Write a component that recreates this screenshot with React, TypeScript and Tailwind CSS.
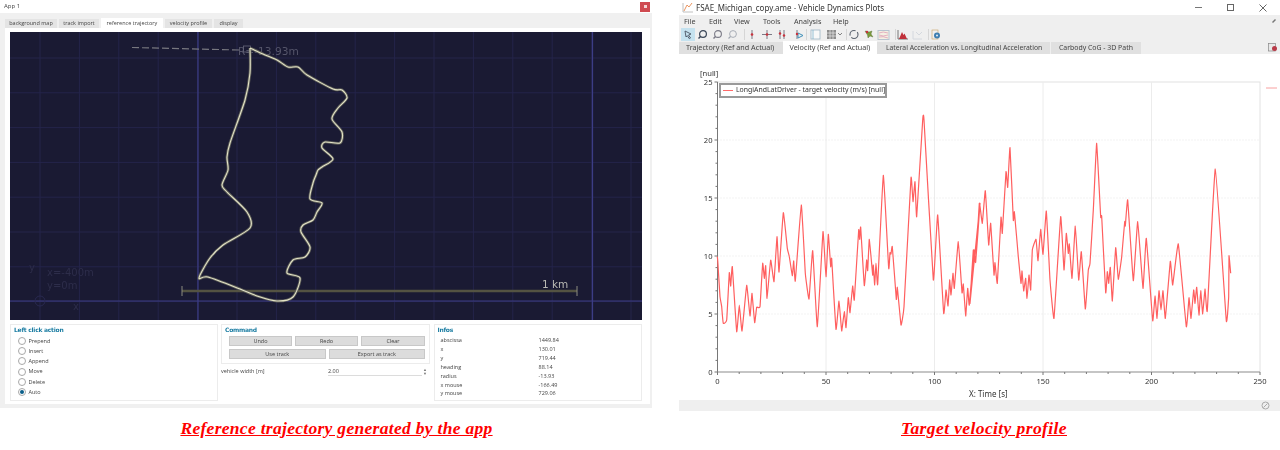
import React from "react";

const trackPts: number[][] = [[250,48],[263,54],[277,60],[288,67],[298,67],[307,75],[333,89],[342,90],[347,98],[338,108],[332,119],[342,132],[340,143],[325,142],[322,148],[333,159],[322,167],[318,170],[316,175],[313,183],[310,199],[322,203],[317,212],[313,220],[303,225],[301,232],[310,247],[305,257],[293,260],[287,273],[300,278],[293,297],[277,301],[257,296],[240,289],[208,277],[199,278],[210,258],[223,245],[250,228],[247,212],[227,192],[222,185],[228,170],[227,157],[230,143],[245,100],[250,73],[250,48]];

const v1: number[][] = [[52,470],[55,510],[60,590],[65,620],[70,670],[80,660],[88,518],[92,558],[97,500],[110,695],[118,615],[126,693],[140,556],[150,648],[156,580],[164,668],[170,622],[180,620],[188,490],[193,535],[197,497],[201,595],[212,480],[222,545],[231,410],[237,516],[250,338],[262,445],[268,470],[277,527],[281,483],[286,543],[304,315],[316,520],[327,597],[338,452],[352,680],[369,395],[378,530],[385,403],[392,500],[395,476],[408,688],[417,603],[425,693],[433,635],[438,683],[445,593],[450,638],[458,558],[463,600],[476,390],[479,418],[482,382],[493,557],[500,480],[503,512],[508,418],[518,525],[520,495],[524,555],[528,490],[533,553],[550,226],[566,505],[570,458],[573,462],[577,440],[589,598],[592,562],[603,675],[612,620],[633,233],[639,305],[645,245],[650,350],[668,60],[672,60],[700,540],[713,345],[731,640],[738,570],[744,618],[749,540],[753,585],[759,520],[763,565],[775,425],[786,578],[790,552],[797,648],[803,565],[808,615],[822,450],[827,485],[840,310]];
const v2: number[][] = [[0,610],[10,450],[17,487],[28,310],[37,370],[46,272],[56,435],[62,370],[72,525],[75,488],[82,550],[93,352],[97,400],[108,215],[113,262],[120,143],[130,360],[133,335],[137,380],[145,470],[153,550],[156,513],[161,573],[167,535],[171,595],[177,525],[182,570],[187,450],[198,418],[204,482],[212,388],[219,463],[229,333],[240,540],[252,655],[272,350],[282,510],[289,400],[295,460],[298,432],[306,535],[316,378],[326,540],[334,455],[346,627],[355,510],[360,490],[370,330],[380,130],[392,350],[395,350],[407,578],[412,515],[416,550],[421,502],[427,603],[437,443],[445,538],[455,470],[464,365],[466,378],[473,300],[490,542],[503,365],[519,565],[529,415],[548,662],[555,588],[561,655],[567,572],[573,630],[579,572],[586,655],[601,484],[608,555],[625,432],[649,680],[657,593],[663,655],[671,570],[675,610],[680,562],[687,645],[692,572],[698,642],[705,567],[712,632],[736,207],[769,662],[776,590],[777,467],[782,520]];

function smooth(pts: number[][], k: number) {
  let d = `M${pts[0][0].toFixed(1)} ${pts[0][1].toFixed(1)}`;
  for (let i = 0; i < pts.length - 1; i++) {
    const p0 = pts[Math.max(i - 1, 0)];
    const p1 = pts[i];
    const p2 = pts[i + 1];
    const p3 = pts[Math.min(i + 2, pts.length - 1)];
    const c1x = p1[0] + (p2[0] - p0[0]) * k;
    const c1y = p1[1] + (p2[1] - p0[1]) * k;
    const c2x = p2[0] - (p3[0] - p1[0]) * k;
    const c2y = p2[1] - (p3[1] - p1[1]) * k;
    d += `C${c1x.toFixed(1)} ${c1y.toFixed(1)} ${c2x.toFixed(1)} ${c2y.toFixed(1)} ${p2[0].toFixed(1)} ${p2[1].toFixed(1)}`;
  }
  return d;
}

const trackD = smooth(trackPts, 0.14);
const velocityD = smooth(
  [
    ...v1.map(([x, y]) => [x / 3 + 700 - 679, y / 3 + 100 - 54]),
    ...v2.map(([x, y]) => [x / 3 + 970 - 679, y / 3 + 100 - 54]),
  ],
  0.05,
);

const range = (n: number) => Array.from({ length: n }, (_, i) => i);

function TrackPlot() {
  const font = "DejaVu Sans, sans-serif";
  return (
    <svg width="632" height="288" viewBox="10 32 632 288" className="block">
      <rect x="10" y="32" width="632" height="288" fill="#1a1a33" />
      {range(16).map((i) => (
        <line key={i} x1={40 + i * 39.4} x2={40 + i * 39.4} y1="32" y2="320" stroke="#24244a" strokeWidth="1" />
      ))}
      {range(8).map((i) => (
        <line key={i} y1={58 + i * 34.8} y2={58 + i * 34.8} x1="10" x2="642" stroke="#24244a" strokeWidth="1" />
      ))}
      <line x1="198" x2="198" y1="32" y2="320" stroke="#3c3d85" strokeWidth="1.2" />
      <line x1="592.5" x2="592.5" y1="32" y2="320" stroke="#3c3d85" strokeWidth="1.2" />
      <line x1="10" x2="642" y1="301" y2="301" stroke="#3c3d85" strokeWidth="1.2" />
      <circle cx="40" cy="301" r="5" fill="none" stroke="#292950" />
      <text x="29" y="271" fontSize="10" fill="#2d2d4a" fontFamily={font}>y</text>
      <text x="73" y="310" fontSize="10" fill="#2d2d4a" fontFamily={font}>x</text>
      <text x="47" y="276" fontSize="10" fill="#2d2d4a" fontFamily={font}>x=-400m</text>
      <text x="47" y="289" fontSize="10" fill="#2d2d4a" fontFamily={font}>y=0m</text>
      <line x1="132" y1="47.5" x2="240" y2="50" stroke="#77777f" strokeWidth="1.2" strokeDasharray="7 3" />
      <text x="238" y="55" fontSize="10.6" fill="#55556a" fontFamily={font}>R=-13.93m</text>
      <line x1="182" x2="577" y1="291" y2="291" stroke="#545342" strokeWidth="2.5" />
      <line x1="182" x2="182" y1="286" y2="296" stroke="#8b8b80" strokeWidth="1" />
      <line x1="577" x2="577" y1="286" y2="296" stroke="#8b8b80" strokeWidth="1" />
      <text x="542" y="288" fontSize="10.5" fill="#b9b9b4" fontFamily={font}>1 km</text>
      <rect x="243.500" y="46" width="7" height="6" fill="none" stroke="#66667a" strokeWidth="0.8" />
      <path d={trackD} fill="none" stroke="#5d5d58" strokeWidth="2.8" strokeLinejoin="round" />
      <path d={trackD} fill="none" stroke="#e2e2c6" strokeWidth="1.1" strokeLinejoin="round" />
    </svg>
  );
}

function Radio({ label, checked }: { label: string; checked?: boolean }) {
  return (
    <div className="flex items-center h-[10.3px] pl-[6.5px] gap-[3px]">
      <span className="w-2 h-2 rounded-full border border-[#a8a8a8] bg-white flex items-center justify-center shrink-0">
        {checked && <span className="w-1 h-1 rounded-full bg-[#0a5f8a]" />}
      </span>
      <span>{label}</span>
    </div>
  );
}

function Btn({ label, w }: { label: string; w: string }) {
  return (
    <div className={`${w} h-[10px] bg-[#dcdcdc] border border-[#c8c8c8] flex items-center justify-center`}>{label}</div>
  );
}

const infos = [
  ["abscissa", "1449.84"],
  ["x", "130.01"],
  ["y", "719.44"],
  ["heading", "88.14"],
  ["radius", "-13.93"],
  ["x mouse", "-166.49"],
  ["y mouse", "729.06"],
];

const groupTitle = "pl-[3px] font-bold text-[#1d7ea3] text-[6px] leading-[8px] pt-[1px] font-['DejaVu_Sans',sans-serif] tracking-[-0.25px]";

function LeftWindow() {
  return (
    <div className="h-[408px] bg-[#f0f0f0] flex flex-col text-[5.5px] text-[#444] font-['Open_Sans',sans-serif] blur-[0.35px]">
      <div className="h-[13px] bg-white flex items-center justify-between pl-1 pr-[2px] text-[6px]">
        <span>App 1</span>
        <span className="w-[10px] h-[10px] bg-[#cf4a50] flex items-center justify-center">
          <span className="w-[3px] h-[3px] bg-[#f3d4d4]" />
        </span>
      </div>
      <div className="flex items-end h-[15px] pl-[5px] gap-[2px] text-[5.5px]">
        <div className="w-[52px] h-[9.5px] bg-[#e4e4e4] flex items-center justify-center">background map</div>
        <div className="w-[40px] h-[9.5px] bg-[#e4e4e4] flex items-center justify-center">track import</div>
        <div className="w-[62px] h-[10px] bg-white flex items-center justify-center">reference trajectory</div>
        <div className="w-[47px] h-[9.5px] bg-[#e4e4e4] flex items-center justify-center">velocity profile</div>
        <div className="w-[29px] h-[9.5px] bg-[#e4e4e4] flex items-center justify-center">display</div>
      </div>
      <div className="mx-[5px] w-[645px] h-[376px] bg-white pt-1 px-[5px]">
        <div className="w-[632px] h-[288px]">
          <TrackPlot />
        </div>
        <div className="flex mt-[3.5px] gap-[3.5px] h-[77px]">
          <div className="w-[207.5px] border border-[#ececec] flex flex-col">
            <div className={`${groupTitle} h-[11px]`}>Left click action</div>
            <Radio label="Prepend" />
            <Radio label="Insert" />
            <Radio label="Append" />
            <Radio label="Move" />
            <Radio label="Delete" />
            <Radio label="Auto" checked />
          </div>
          <div className="w-[209px] flex flex-col">
            <div className="h-[40px] border border-[#ececec]">
              <div className={`${groupTitle} h-[11.5px]`}>Command</div>
              <div className="flex flex-col gap-[3px] pl-[7px]">
                <div className="flex gap-[3px]">
                  <Btn label="Undo" w="w-[63px]" />
                  <Btn label="Redo" w="w-[63px]" />
                  <Btn label="Clear" w="w-[64px]" />
                </div>
                <div className="flex gap-[3px]">
                  <Btn label="Use track" w="w-[96.5px]" />
                  <Btn label="Export as track" w="w-[96.5px]" />
                </div>
              </div>
            </div>
            <div className="flex items-center h-[10px] mt-[3px]">
              <span className="w-[107px]">vehicle width [m]</span>
              <span className="w-[94px] border-b border-[#dcdcdc] h-[9px] leading-[9px]">2.00</span>
              <span className="ml-[1px] text-[4px] leading-[4px] text-[#777] flex flex-col">
                <span>▲</span>
                <span>▼</span>
              </span>
            </div>
          </div>
          <div className="w-[208px] border border-[#ececec]">
            <div className={`${groupTitle} h-[11.5px]`}>Infos</div>
            {infos.map(([k, v]) => (
              <div key={k} className="flex h-[8.85px] items-center pl-[6px]">
                <span className="w-[98px]">{k}</span>
                <span>{v}</span>
              </div>
            ))}
          </div>
        </div>
      </div>
    </div>
  );
}

function ToolIcons() {
  const g = "#7a7a86";
  const r = "#c8323c";
  return (
    <svg width="270" height="13" viewBox="1 0 270 13" className="block">
      <rect x="3" y="0" width="14" height="13" fill="#c5e2ef" />
      <path d="M7 3l6 3-2.500 1 2 3-1.200.7-2-3L8 9z" fill="none" stroke="#4b5563" strokeWidth="0.9" />
      <circle cx="25" cy="6" r="3.400" fill="none" stroke="#3a4658" strokeWidth="1.200" />
      <path d="M22.500 8.500l-2 2" stroke="#3a4658" strokeWidth="1.400" />
      <circle cx="40" cy="6" r="3.400" fill="none" stroke={g} strokeWidth="1.100" />
      <path d="M37.500 8.500l-2 2" stroke={g} strokeWidth="1.400" />
      <circle cx="55" cy="6" r="3.400" fill="none" stroke="#a0a6b0" strokeWidth="0.9" />
      <path d="M52.500 8.500l-2 2" stroke="#a0a6b0" strokeWidth="1.100" />
      <line x1="66.500" x2="66.500" y1="1" y2="12" stroke="#d6d6d6" />
      <line x1="74" x2="74" y1="2" y2="11" stroke={g} />
      <circle cx="74" cy="6.500" r="1.300" fill={r} />
      <line x1="84" x2="94" y1="6.500" y2="6.500" stroke={g} />
      <line x1="89" x2="89" y1="2" y2="11" stroke={g} />
      <circle cx="89" cy="6.500" r="1.300" fill={r} />
      <line x1="102" x2="102" y1="2" y2="11" stroke={g} />
      <line x1="106" x2="106" y1="2" y2="11" stroke={g} />
      <circle cx="102" cy="5.500" r="1.200" fill={r} />
      <circle cx="106" cy="7.500" r="1.200" fill={r} />
      <line x1="119" x2="119" y1="2" y2="11" stroke={g} />
      <path d="M120 5l5 2.500-5 2.500z" fill="none" stroke="#3f8fb8" />
      <circle cx="119" cy="6" r="1.200" fill={r} />
      <line x1="128.500" x2="128.500" y1="1" y2="12" stroke="#d6d6d6" />
      <rect x="133" y="2" width="9" height="9" fill="#f8f8f8" stroke="#9fb6c6" strokeWidth="0.8" />
      <path d="M135 2v9" stroke="#7fb2cc" strokeWidth="0.8" />
      <rect x="149" y="2" width="9" height="9" fill="#8c8c8c" />
      <path d="M152 2v9M155 2v9M149 5h9M149 8h9" stroke="#e8e8e8" strokeWidth="0.7" />
      <path d="M160 5l2 2 2-2" fill="none" stroke="#666" strokeWidth="0.8" />
      <line x1="168.500" x2="168.500" y1="1" y2="12" stroke="#d6d6d6" />
      <circle cx="176" cy="6.500" r="4" fill="none" stroke="#5c6470" strokeWidth="1.100" strokeDasharray="9 2" />
      <path d="M187 3l4 1 3-1-1 3 2 3-3-1-2 2-.5-3z" fill="#7a9a3a" stroke="#55703a" strokeWidth="0.4" />
      <circle cx="189" cy="4" r="1.200" fill={r} />
      <rect x="200" y="2.500" width="11" height="9" fill="#f4f0e2" stroke="#b8c4d0" />
      <path d="M201 5q4-2 9 0M201 7q4 2 9 0M201 9q4-1 9 1" fill="none" stroke="#e0a0b8" strokeWidth="0.8" />
      <line x1="217.500" x2="217.500" y1="1" y2="12" stroke="#d6d6d6" />
      <path d="M220 2v9h10" fill="none" stroke="#777" />
      <path d="M221 11l3-7 1.500 3 1-1.500 2.500 5.500z" fill="#c0303a" />
      <path d="M235 3v8h9M238 4l3 3 3-3" fill="none" stroke="#d4d8de" strokeWidth="1" />
      <line x1="250.500" x2="250.500" y1="1" y2="12" stroke="#d6d6d6" />
      <rect x="254" y="2" width="6" height="9" fill="#f0f0f0" stroke="#c8a060" strokeWidth="0.6" />
      <circle cx="259" cy="7.500" r="3" fill="#3f7fb0" />
      <circle cx="259" cy="7.500" r="1" fill="#e8eef4" />
    </svg>
  );
}

function VelocityPlot() {
  const X = (v: number) => 717.5 - 679 + v * 2.17;
  const Y = (v: number) => 372 - 54 - v * 11.6;
  const font = "Noto Sans, sans-serif";
  return (
    <svg width="601" height="346" viewBox="0 0 601 346" className="block">
      <text x="21" y="22" fontSize="7.600" fill="#333" fontFamily={font}>[null]</text>
      <rect x={X(0)} y={Y(25)} width={X(250) - X(0)} height={Y(0) - Y(25)} fill="none" stroke="#e2e2e2" />
      {[50, 100, 150, 200].map((v) => (
        <line key={v} x1={X(v)} x2={X(v)} y1={Y(25)} y2={Y(0)} stroke="#ececec" />
      ))}
      {[5, 10, 15, 20].map((v) => (
        <line key={v} y1={Y(v)} y2={Y(v)} x1={X(0)} x2={X(250)} stroke="#e6e6e6" strokeDasharray="1 2" />
      ))}
      <line x1={X(0)} x2={X(0)} y1={Y(25)} y2={Y(0)} stroke="#777" />
      <line x1={X(0)} x2={X(250)} y1={Y(0)} y2={Y(0)} stroke="#999" />
      {range(26).map((i) => (
        <line key={i} x1={X(0) - (i % 5 === 0 ? 3 : 2)} x2={X(0)} y1={Y(i)} y2={Y(i)} stroke="#777" />
      ))}
      {range(26).map((i) => (
        <line key={i} x1={X(i * 10)} x2={X(i * 10)} y1={Y(0)} y2={Y(0) + (i % 5 === 0 ? 3 : 2)} stroke="#777" />
      ))}
      {[0, 5, 10, 15, 20, 25].map((v) => (
        <text key={v} x={X(0) - 5} y={Y(v) + 2.500} fontSize="7.600" textAnchor="end" fill="#333" fontFamily={font}>{v}</text>
      ))}
      {[0, 50, 100, 150, 200, 250].map((v) => (
        <text key={v} x={X(v)} y="330" fontSize="7.600" textAnchor="middle" fill="#333" fontFamily={font}>{v}</text>
      ))}
      <text x="290" y="342.500" fontSize="8" fill="#333" fontFamily={font}>X: Time [s]</text>
      <path d={velocityD} fill="none" stroke="#ff5f5f" strokeWidth="1.200" strokeLinejoin="round" />
      <line x1="587" x2="598" y1="34" y2="34" stroke="#f8a0a0" strokeWidth="1" />
    </svg>
  );
}

function RightWindow() {
  const tab = "h-[12.500px] flex items-center whitespace-nowrap";
  return (
    <div className="h-[411px] bg-white flex flex-col text-[7.200px] text-[#444] font-['Noto_Sans',sans-serif] blur-[0.35px]">
      <div className="h-[15px] flex items-center text-[8px] text-[#333]">
        <svg width="12" height="11" viewBox="0 0 12 11" className="ml-[3px] mr-[2px]">
          <path d="M1 1v9h10" fill="none" stroke="#b0b0b0" strokeWidth="0.8" />
          <path d="M2 9l3-6 2 2 3-4" fill="none" stroke="#e88a50" strokeWidth="0.9" />
        </svg>
        <span>FSAE_Michigan_copy.ame - Vehicle Dynamics Plots</span>
        <div className="ml-auto flex items-center gap-[25px] pr-[13px]">
          <span className="w-[7px] h-[1px] bg-[#777]" />
          <span className="w-[7px] h-[7px] border border-[#666]" />
          <svg width="8" height="8" viewBox="0 0 8 8">
            <path d="M.5.500l7 7M7.500.500l-7 7" stroke="#555" strokeWidth="0.9" />
          </svg>
        </div>
      </div>
      <div className="bg-[#efefef] h-[26px] flex flex-col">
        <div className="h-[13px] flex items-center pl-[5px] relative">
          <span className="w-[25px]">File</span>
          <span className="w-[25px]">Edit</span>
          <span className="w-[29px]">View</span>
          <span className="w-[31px]">Tools</span>
          <span className="w-[39px]">Analysis</span>
          <span>Help</span>
          <svg width="6" height="6" viewBox="0 0 6 6" className="absolute right-[3px] top-[3px]">
            <path d="M1 4l3-3 1 1-3 3z" fill="#777" />
          </svg>
        </div>
        <div className="h-[13px] overflow-hidden">
          <ToolIcons />
        </div>
      </div>
      <div className="bg-[#efefef] h-[13px] flex items-end relative">
        <div className={`${tab} w-[103.500px] bg-[#e0e0e0] pl-[7px]`}>Trajectory (Ref and Actual)</div>
        <div className={`${tab} w-[94.500px] bg-white pl-[7px] h-[13px]`}>Velocity (Ref and Actual)</div>
        <div className={`${tab} w-[173px] bg-[#e0e0e0] pl-[9px] text-[6.800px]`}>Lateral Acceleration vs. Longitudinal Acceleration</div>
        <div className={`${tab} w-[90px] bg-[#e0e0e0] pl-[8px] ml-[1px] text-[6.900px]`}>Carbody CoG - 3D Path</div>
        <svg width="10" height="9" viewBox="0 0 10 9" className="absolute right-[2px] top-[2px]">
          <rect x="0.500" y="0.500" width="7" height="7.500" fill="#e8e8e8" stroke="#888" strokeWidth="0.7" />
          <circle cx="6.500" cy="5.500" r="2.500" fill="#b83a48" />
        </svg>
      </div>
      <div className="h-[346px] relative bg-white">
        <VelocityPlot />
        <div className="absolute left-[40px] top-[29px] w-[168px] h-[15px] bg-white border-2 border-[#9a9a9a] flex items-center pl-[2px] gap-[3px] text-[#333] text-[6.900px] whitespace-nowrap">
          <span className="w-[10px] h-[1px] shrink-0 bg-[#ff6b6b]" />
          <span>LongiAndLatDriver - target velocity (m/s) [null]</span>
        </div>
      </div>
      <div className="h-[11px] bg-[#efefef] flex items-center justify-end pr-[10px]">
        <svg width="9" height="9" viewBox="0 0 9 9">
          <circle cx="4.500" cy="4.500" r="3.500" fill="none" stroke="#aaa" />
          <path d="M2.500 6.500l4-4" stroke="#aaa" />
        </svg>
      </div>
    </div>
  );
}

const caption = "text-center text-[#ff0000] font-['Liberation_Serif',serif] font-bold italic underline text-[17.500px] leading-[20px] tracking-[0.3px] whitespace-nowrap";

export default function App() {
  return (
    <div className="w-[1280px] h-[450px] bg-white flex overflow-hidden">
      <div className="w-[652px] shrink-0 flex flex-col">
        <LeftWindow />
        <div className={`${caption} mt-[10px] pl-[21px]`}>Reference trajectory generated by the app</div>
      </div>
      <div className="w-[601px] ml-[27px] shrink-0 flex flex-col">
        <RightWindow />
        <div className={`${caption} mt-[7px] pl-[9px] tracking-[0.4px]`}>Target velocity profile</div>
      </div>
    </div>
  );
}
